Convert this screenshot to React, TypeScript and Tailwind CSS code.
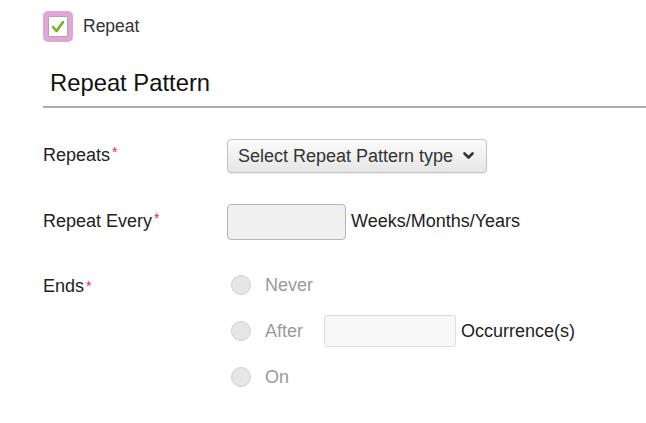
import React from "react";

function Req() {
  return <span className="text-[#e0245e] text-[14px] align-top relative top-[0px] ml-[2px]">*</span>
}

function Radio({ label }: { label: string }) {
  return <div className="flex items-center h-[32px] pl-[4px]">
    <span className="w-[20px] h-[20px] rounded-full bg-[#e6e6e6] border border-[#cfcfcf] shrink-0" />
    <span className="ml-[14px] text-[#9a9a9a]">{label}</span>
  </div>
}

export default function App() {
  return <div className="min-h-[423px] bg-white pl-[43px] pt-[11px] font-['Liberation_Sans',Arial,sans-serif] text-[18px] text-[#222]">
    <div className="flex items-center h-[31px]">
      <div className="w-[30px] h-[31px] rounded-[5px] bg-[#e2a5d8] p-[5px]">
        <div className="w-full h-full bg-white border border-[#a8a8a8] rounded-[2px] flex items-center justify-center">
          <svg width="14" height="13" viewBox="0 0 14 13">
            <path d="M2 7 L5.5 11 L12 2" fill="none" stroke="#72b51a" strokeWidth="2.6" strokeLinecap="round" strokeLinejoin="round" />
          </svg>
        </div>
      </div>
      <span className="ml-[10px] text-[#333] text-[17.5px]">Repeat</span>
    </div>

    <div className="mt-[23px] pl-[7px] pt-[4px] pb-[9px] border-b-2 border-[#ababab] text-[23.8px] leading-[28px] text-[#111]">
      Repeat Pattern
    </div>

    <div className="flex items-center mt-[31px]">
      <div className="w-[184px] pb-[2px]">Repeats<Req /></div>
      <div className="w-[260px] h-[34px] rounded-[4px] border border-[#c2c2c2] bg-gradient-to-b from-[#fbfbfb] to-[#e6e6e6] shadow-[0_1px_1px_rgba(0,0,0,0.08)] flex items-center pl-[10px] pr-[12px] text-[#333]">
        <span className="grow">Select Repeat Pattern type</span>
        <svg width="11" height="8" viewBox="0 0 11 8">
          <path d="M1.5 1.5 L5.5 5.5 L9.5 1.5" fill="none" stroke="#333" strokeWidth="2.6" strokeLinecap="round" strokeLinejoin="round" />
        </svg>
      </div>
    </div>

    <div className="flex items-center mt-[31px]">
      <div className="w-[184px] pb-[2px]">Repeat Every<Req /></div>
      <div className="w-[119px] h-[36px] rounded-[4px] border border-[#b5b5b5] bg-[#f0f0f0]" />
      <span className="ml-[5px] pb-[2px]">Weeks/Months/Years</span>
    </div>

    <div className="flex mt-[29px]">
      <div className="w-[184px] h-[32px] flex items-center pt-[2px]">Ends<Req /></div>
      <div className="flex flex-col gap-[14px]">
        <Radio label="Never" />
        <div className="flex items-center">
          <div className="w-[97px]"><Radio label="After" /></div>
          <div className="w-[132px] h-[32px] rounded-[3px] border border-[#dcdcdc] bg-[#f8f8f8]" />
          <span className="ml-[5px]">Occurrence(s)</span>
        </div>
        <Radio label="On" />
      </div>
    </div>
  </div>
}
